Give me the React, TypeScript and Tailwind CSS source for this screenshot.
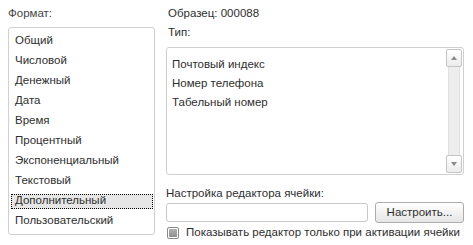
const formats = [
  "Общий",
  "Числовой",
  "Денежный",
  "Дата",
  "Время",
  "Процентный",
  "Экспоненциальный",
  "Текстовый",
  "Дополнительный",
  "Пользовательский",
]

const types = ["Почтовый индекс", "Номер телефона", "Табельный номер"]

export default function App() {
  return (
    <div className="w-[473px] h-[245px] bg-white text-[11.5px] text-[#2e2e2e] font-['Liberation_Sans',sans-serif] flex gap-[11px] pl-[8px] pt-[7px] leading-none">
      <div className="flex flex-col w-[147px]">
        <div className="h-[13px] flex items-center text-[#444]">Формат:</div>
        <div className="mt-[7px] h-[208px] border border-[#d0d0d0] rounded-[3px] flex flex-col pt-[3px] pl-[2px] pr-[1px]">
          {formats.map((f) => (
            <FormatItem key={f} text={f} selected={f === "Дополнительный"} />
          ))}
        </div>
      </div>
      <div className="flex flex-col w-[298px]">
        <div className="h-[13px] flex items-center pl-[2px]">Образец: 000088</div>
        <div className="mt-[6px] h-[13px] flex items-center pl-[2px]">Тип:</div>
        <div className="mt-[8px] h-[128px] border border-[#d0d0d0] rounded-[3px] flex">
          <div className="flex-1 flex flex-col pt-[7px] pl-[5px]">
            {types.map((t) => (
              <div key={t} className="h-[19px] flex items-center">
                {t}
              </div>
            ))}
          </div>
          <Scrollbar />
        </div>
        <div className="mt-[12px] h-[13px] flex items-center">Настройка редактора ячейки:</div>
        <div className="mt-[2px] flex gap-[7px] items-center">
          <div className="w-[202px] h-[19px] border border-[#c8c8c8] rounded-[3px] bg-white" />
          <button className="w-[89px] h-[21px] border border-[#acacac] rounded-[3px] bg-gradient-to-b from-white to-[#e6e6e6] text-[#2e2e2e] text-[11.5px] leading-none">
            Настроить...
          </button>
        </div>
        <div className="mt-[4px] flex items-center gap-[7px] pl-[1px] whitespace-nowrap">
          <div className="w-[12px] h-[12px] border border-[#8a8a8a] rounded-[2px] bg-white flex items-center justify-center">
            <div className="w-[8px] h-[8px] rounded-[1px] bg-gradient-to-b from-[#b0b0b0] to-[#8f8f8f]" />
          </div>
          <span>Показывать редактор только при активации ячейки</span>
        </div>
      </div>
    </div>
  )
}

function FormatItem({ text, selected }: { text: string; selected: boolean }) {
  return (
    <div className="h-[20px] flex items-center">
      <div
        className={
          selected
            ? "w-full h-[15px] flex items-center pl-[3px] bg-[#e6e6e6] border border-dotted border-black"
            : "w-full h-[15px] flex items-center pl-[4px]"
        }
      >
        {text}
      </div>
    </div>
  )
}

function Scrollbar() {
  return (
    <div className="w-[17px] flex flex-col py-[1px] pr-[1px]">
      <div className="h-[18px] border border-[#c4c4c4] rounded-[2px] bg-gradient-to-b from-white to-[#ececec] flex items-center justify-center">
        <svg width="6" height="4" viewBox="0 0 6 4">
          <path d="M0 4 L3 0 L6 4 Z" fill="#8a8a8a" />
        </svg>
      </div>
      <div className="flex-1 mx-[2px] bg-[#ededed] border-x border-[#e0e0e0]" />
      <div className="h-[18px] border border-[#c4c4c4] rounded-[2px] bg-gradient-to-b from-white to-[#ececec] flex items-center justify-center">
        <svg width="6" height="4" viewBox="0 0 6 4">
          <path d="M0 0 L3 4 L6 0 Z" fill="#8a8a8a" />
        </svg>
      </div>
    </div>
  )
}
